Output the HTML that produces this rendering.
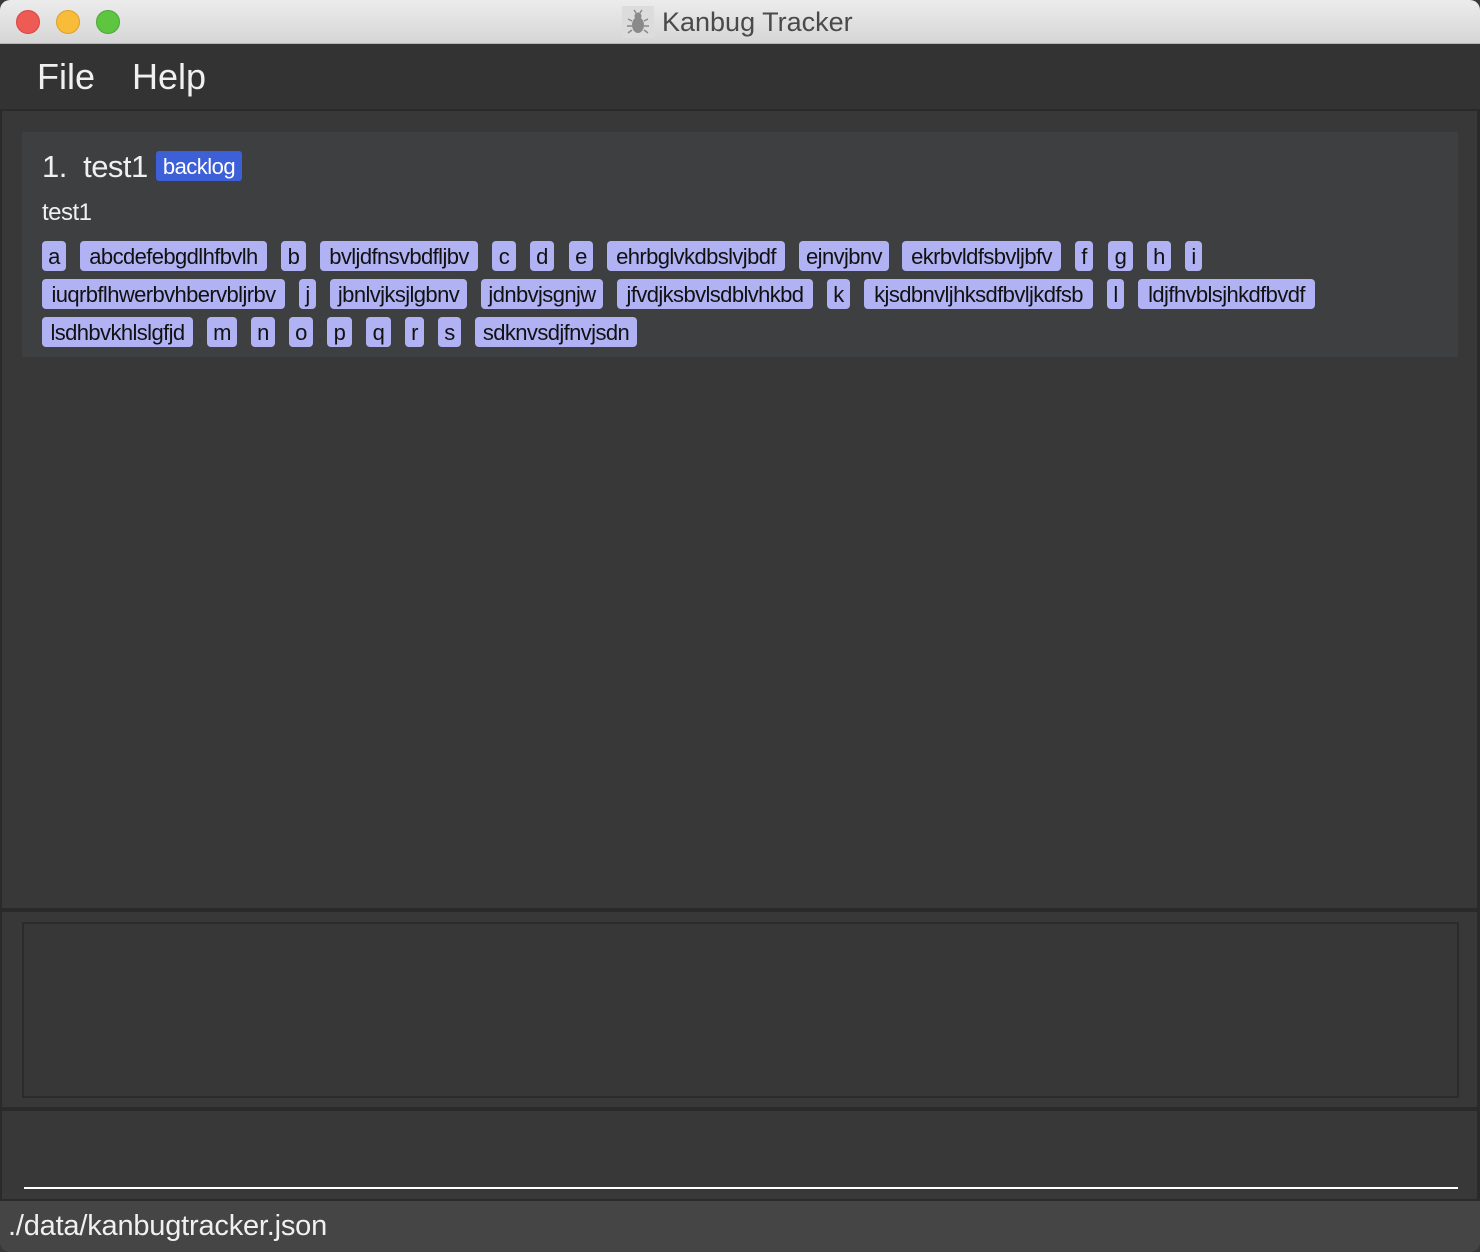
<!DOCTYPE html>
<html><head><meta charset="utf-8"><style>
*{margin:0;padding:0;box-sizing:border-box}
body{width:1480px;height:1252px;overflow:hidden;background:#383838;font-family:"Liberation Sans",sans-serif;position:relative}
.abs{position:absolute}
.title{left:0;top:0;width:1480px;height:44px;background:linear-gradient(#ececec,#d6d6d6);border-bottom:1px solid #b5b5b5;border-radius:10px 10px 0 0}
.dot{position:absolute;top:10px;width:24px;height:24px;border-radius:50%}
.menu{left:0;top:44px;width:1480px;height:67px;background:#333333;border-bottom:2px solid #2a2a2a}
.menu span{position:absolute;top:12px;color:#f0f0f0;font-size:36px}
.tag{position:absolute;height:30px;background:#b1b2f3;border-radius:4px;color:#111;font-size:22px;display:flex;align-items:center;justify-content:center;white-space:nowrap;letter-spacing:-0.6px;padding-top:1px}
</style></head><body>
<div class="abs title">
 <div class="dot" style="left:16px;background:#ee5b55;border:1px solid #d8463f"></div>
 <div class="dot" style="left:56px;background:#f8bc38;border:1px solid #dea02a"></div>
 <div class="dot" style="left:96px;background:#5ec541;border:1px solid #48a833"></div>
 <div class="abs" style="left:622px;top:6px;width:32px;height:32px;background:#dcdcdc"></div>
 <svg class="abs" style="left:626px;top:9px" width="24" height="26" viewBox="0 0 24 26"><ellipse cx="12" cy="16" rx="6" ry="8" fill="#8a8a8a"/><circle cx="12" cy="7" r="3.5" fill="#8a8a8a"/><path d="M6 12L2 10M6 17H1M6 21L2 24M18 12L22 10M18 17H23M18 21L22 24M10 4L8 1M14 4L16 1" stroke="#8a8a8a" stroke-width="1.5" fill="none"/></svg>
 <div class="abs" style="left:662px;top:7px;font-size:27px;color:#4a4a4a">Kanbug Tracker</div>
</div>
<div class="abs menu"><span style="left:37px">File</span><span style="left:132px">Help</span></div>
<div class="abs" style="left:0;top:111px;width:2px;height:1090px;background:#2a2a2a"></div>
<div class="abs" style="left:1477px;top:111px;width:3px;height:1090px;background:#2a2a2a"></div>
<div class="abs" style="left:22px;top:132px;width:1436px;height:225px;background:#3e3f41"></div>
<div class="abs" style="left:42px;top:149px;font-size:31px;color:#f0f0f0;letter-spacing:-0.5px">1.&nbsp; test1</div>
<div class="abs" style="left:156px;top:151px;width:86px;height:30px;background:#3d5fd8;border-radius:3px;color:#fff;font-size:22px;text-align:center;line-height:31px;letter-spacing:-0.5px">backlog</div>
<div class="abs" style="left:42px;top:199px;font-size:24px;color:#f0f0f0;letter-spacing:-0.5px">test1</div>

<div class="tag" style="left:42px;top:241px;width:24px">a</div>
<div class="tag" style="left:80px;top:241px;width:187px">abcdefebgdlhfbvlh</div>
<div class="tag" style="left:281px;top:241px;width:25px">b</div>
<div class="tag" style="left:320px;top:241px;width:158px">bvljdfnsvbdfljbv</div>
<div class="tag" style="left:492px;top:241px;width:24px">c</div>
<div class="tag" style="left:530px;top:241px;width:24px">d</div>
<div class="tag" style="left:569px;top:241px;width:24px">e</div>
<div class="tag" style="left:607px;top:241px;width:178px">ehrbglvkdbslvjbdf</div>
<div class="tag" style="left:799px;top:241px;width:90px">ejnvjbnv</div>
<div class="tag" style="left:902px;top:241px;width:159px">ekrbvldfsbvljbfv</div>
<div class="tag" style="left:1075px;top:241px;width:18px">f</div>
<div class="tag" style="left:1108px;top:241px;width:25px">g</div>
<div class="tag" style="left:1147px;top:241px;width:24px">h</div>
<div class="tag" style="left:1185px;top:241px;width:17px">i</div>

<div class="tag" style="left:42px;top:279px;width:243px">iuqrbflhwerbvhbervbljrbv</div>
<div class="tag" style="left:299px;top:279px;width:17px">j</div>
<div class="tag" style="left:330px;top:279px;width:137px">jbnlvjksjlgbnv</div>
<div class="tag" style="left:481px;top:279px;width:122px">jdnbvjsgnjw</div>
<div class="tag" style="left:617px;top:279px;width:196px">jfvdjksbvlsdblvhkbd</div>
<div class="tag" style="left:827px;top:279px;width:23px">k</div>
<div class="tag" style="left:864px;top:279px;width:229px">kjsdbnvljhksdfbvljkdfsb</div>
<div class="tag" style="left:1107px;top:279px;width:17px">l</div>
<div class="tag" style="left:1138px;top:279px;width:177px">ldjfhvblsjhkdfbvdf</div>

<div class="tag" style="left:42px;top:317px;width:151px">lsdhbvkhlslgfjd</div>
<div class="tag" style="left:207px;top:317px;width:30px">m</div>
<div class="tag" style="left:251px;top:317px;width:24px">n</div>
<div class="tag" style="left:289px;top:317px;width:24px">o</div>
<div class="tag" style="left:327px;top:317px;width:25px">p</div>
<div class="tag" style="left:366px;top:317px;width:25px">q</div>
<div class="tag" style="left:405px;top:317px;width:19px">r</div>
<div class="tag" style="left:438px;top:317px;width:23px">s</div>
<div class="tag" style="left:475px;top:317px;width:162px">sdknvsdjfnvjsdn</div>

<div class="abs" style="left:0;top:908px;width:1480px;height:4px;background:#2a2a2a"></div>
<div class="abs" style="left:22px;top:922px;width:1437px;height:176px;border:2px solid #2b2b2b;background:#373737"></div>
<div class="abs" style="left:0;top:1107px;width:1480px;height:4px;background:#2a2a2a"></div>
<div class="abs" style="left:24px;top:1187px;width:1434px;height:2px;background:#fff"></div>
<div class="abs" style="left:0;top:1199px;width:1480px;height:2px;background:#2a2a2a"></div>
<div class="abs" style="left:0;top:1201px;width:1480px;height:51px;background:#454545;border-radius:0 0 10px 10px"></div>
<div class="abs" style="left:8px;top:1210px;font-size:29px;color:#f0f0f0;letter-spacing:-0.2px">./data/kanbugtracker.json</div>
</body></html>
